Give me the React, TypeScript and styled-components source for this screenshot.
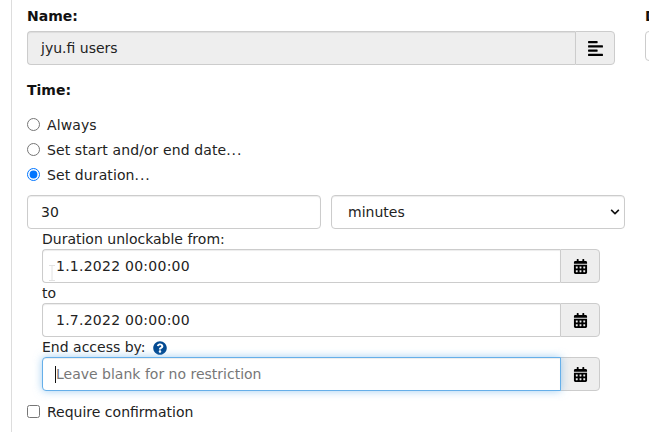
import styled, { createGlobalStyle } from 'styled-components';
import { FaAlignLeft, FaCalendarAlt, FaQuestionCircle, FaChevronDown } from 'react-icons/fa';

const GlobalStyle = createGlobalStyle`
  html, body {
    margin: 0;
    height: 100%;
    overflow: hidden;
    background: #fff;
  }
  body {
    font-family: "DejaVu Sans", Verdana, sans-serif;
    font-size: 14px;
    color: #222;
  }
`;

const Page = styled.div`
  width: 638px;
  height: 432px;
  overflow: hidden;
  box-sizing: border-box;
  margin-left: 11px;
  padding: 8px 0 0 15px;
  border-left: 1px solid #ddd;
  display: flex;
  gap: 30px;
`;

const Column = styled.div`
  flex: 0 0 588px;
  min-width: 0;
  display: flex;
  flex-direction: column;
`;

const SideColumn = styled.div`
  flex: 0 0 200px;
  display: flex;
  flex-direction: column;
`;

const Label = styled.label`
  display: block;
  font-weight: 700;
  color: #111;
  line-height: 17px;
`;

const TimeLabel = styled(Label)`
  margin-top: 17px;
`;

const SideInput = styled.div`
  margin-top: 6px;
  height: 30px;
  box-sizing: border-box;
  border: 1px solid #ccc;
  border-radius: 4px;
`;

const InputGroup = styled.div<{ $mt?: number }>`
  display: flex;
  height: 34px;
  margin-top: ${(p) => p.$mt ?? 0}px;
`;

const Field = styled.div<{ $disabled?: boolean; $focus?: boolean }>`
  flex: 1;
  min-width: 0;
  box-sizing: border-box;
  display: flex;
  align-items: center;
  padding: 0 13px;
  border: 1px solid ${(p) => (p.$focus ? '#66afe9' : '#ccc')};
  border-right-width: ${(p) => (p.$focus ? 1 : 0)}px;
  margin-right: ${(p) => (p.$focus ? -1 : 0)}px;
  z-index: ${(p) => (p.$focus ? 1 : 'auto')};
  border-radius: 4px 0 0 4px;
  background: ${(p) => (p.$disabled ? '#eee' : '#fff')};
  box-shadow: ${(p) =>
    p.$focus
      ? 'inset 0 1px 1px rgba(0,0,0,.075), 0 0 8px rgba(102,175,233,.6)'
      : 'inset 0 1px 1px rgba(0,0,0,.075)'};
  color: #222;
  white-space: nowrap;
  position: relative;
`;

const DateText = styled.span`
  letter-spacing: 0.25px;
`;

const Addon = styled.div<{ $iconSize?: number }>`
  flex: 0 0 40px;
  box-sizing: border-box;
  display: flex;
  align-items: center;
  justify-content: center;
  border: 1px solid #ccc;
  border-radius: 0 4px 4px 0;
  background: #eee;
  color: #000;
  font-size: ${(p) => p.$iconSize ?? 15}px;
`;

const Placeholder = styled.span`
  color: #777;
`;

const Caret = styled.span`
  position: absolute;
  left: 12px;
  top: 8px;
  width: 1px;
  height: 17px;
  background: #111;
`;

// faint mouse pointer caught in the screenshot
const Pointer = styled.svg`
  position: absolute;
  left: 5px;
  top: 15px;
`;

const Options = styled.div`
  margin-top: 17px;
  display: flex;
  flex-direction: column;
  gap: 8px;
`;

const OptionRow = styled.div`
  display: flex;
  align-items: center;
  height: 17px;
  gap: 7px;
`;

const ConfirmRow = styled(OptionRow)`
  margin-top: 12px;
`;

const OptionText = styled.span`
  letter-spacing: 0.1px;
`;

const Dots = styled.span`
  letter-spacing: 0.9px;
`;

const Radio = styled.input.attrs({ type: 'radio', readOnly: true })`
  margin: 0;
  width: 13px;
  height: 13px;
`;

const Check = styled.input.attrs({ type: 'checkbox', readOnly: true })`
  margin: 0;
  width: 13px;
  height: 13px;
`;

const DurationRow = styled.div`
  display: grid;
  grid-template-columns: 1fr 1fr;
  gap: 10px;
  margin-top: 12px;
  width: 598px;
`;

const DurationInput = styled(Field)`
  height: 34px;
  border-right-width: 1px;
  border-radius: 4px;
`;

const UnitSelect = styled(DurationInput)`
  justify-content: space-between;
  padding: 0 4px 0 16px;
`;

const Nested = styled.div`
  padding-left: 15px;
  width: 558px;
  display: flex;
  flex-direction: column;
`;

const SubLabel = styled.div`
  line-height: 17px;
  margin-top: 2px;
  margin-bottom: 1px;
  display: flex;
  align-items: center;
  gap: 7px;
`;

const HelpIcon = styled(FaQuestionCircle)`
  color: #034a92;
  font-size: 14px;
`;

const App = () => {
  return (
    <Page>
      <GlobalStyle />
      <Column>
        <Label>Name:</Label>
        <InputGroup $mt={6}>
          <Field $disabled>jyu.fi users</Field>
          <Addon $iconSize={17}><FaAlignLeft /></Addon>
        </InputGroup>
        <TimeLabel>Time:</TimeLabel>
        <Options>
          <OptionRow><Radio name="time" /> <OptionText>Always</OptionText></OptionRow>
          <OptionRow><Radio name="time" /> <OptionText>Set start and/or end date<Dots>...</Dots></OptionText></OptionRow>
          <OptionRow><Radio name="time" defaultChecked /> <OptionText>Set duration<Dots>...</Dots></OptionText></OptionRow>
        </Options>
        <DurationRow>
          <DurationInput>30</DurationInput>
          <UnitSelect>
            minutes
            <FaChevronDown size={10} color="#111" />
          </UnitSelect>
        </DurationRow>
        <Nested>
          <SubLabel>Duration unlockable from:</SubLabel>
          <InputGroup>
            <Field>
              <Pointer width="8" height="16" viewBox="0 0 8 16" fill="none" stroke="#e2e2e2">
                <path d="M1 .5h6M4 .5v15M1 15.5h6" />
              </Pointer>
              <DateText>1.1.2022 00:00:00</DateText>
            </Field>
            <Addon><FaCalendarAlt /></Addon>
          </InputGroup>
          <SubLabel>to</SubLabel>
          <InputGroup>
            <Field><DateText>1.7.2022 00:00:00</DateText></Field>
            <Addon><FaCalendarAlt /></Addon>
          </InputGroup>
          <SubLabel>End access by: <HelpIcon /></SubLabel>
          <InputGroup>
            <Field $focus><Caret /><Placeholder>Leave blank for no restriction</Placeholder></Field>
            <Addon><FaCalendarAlt /></Addon>
          </InputGroup>
        </Nested>
        <ConfirmRow><Check /> Require confirmation</ConfirmRow>
      </Column>
      <SideColumn>
        <Label>D</Label>
        <SideInput />
      </SideColumn>
    </Page>
  );
};

export default App;
